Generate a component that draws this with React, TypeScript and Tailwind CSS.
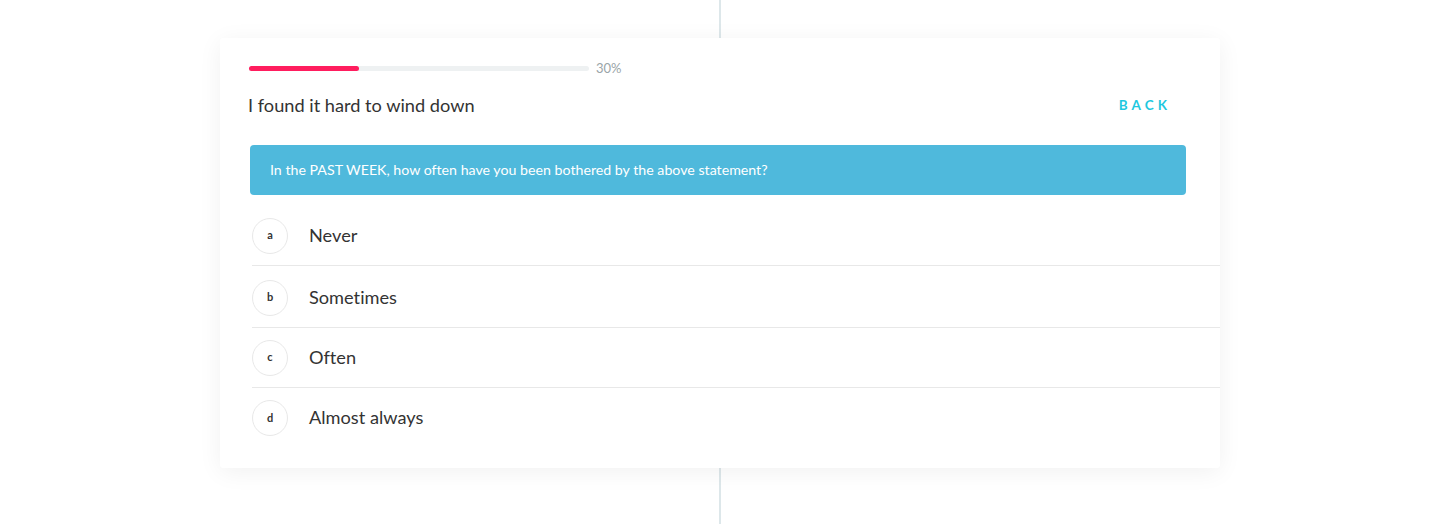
import React from "react";

const options = [
  { key: "a", label: "Never" },
  { key: "b", label: "Sometimes" },
  { key: "c", label: "Often" },
  { key: "d", label: "Almost always" },
];

export default function App() {
  return (
    <div
      className="relative w-[1440px] h-[524px] bg-white overflow-hidden pt-[38px] [font-variant-ligatures:none]"
      style={{ fontFamily: "Lato, 'Open Sans', sans-serif" }}
    >
      <div className="absolute left-[719px] top-0 w-[2px] h-full bg-[#dde7ea]" />
      <div className="relative mx-auto w-[1000px] h-[430px] bg-white rounded-[3px] shadow-[0_4px_24px_rgba(0,0,0,0.06)] pl-[29px] pt-[24px]">
        <div className="flex items-center">
          <div className="w-[340px] h-[5px] rounded-full bg-[#eef1f2]">
            <div className="w-[110px] h-[5px] rounded-full bg-[#ff1d5e]" />
          </div>
          <span className="ml-[7px] text-[13px] text-[#9aa5a8] leading-none">30%</span>
        </div>
        <div className="flex items-center justify-between mt-[18px] pr-[53px]">
          <h1 className="-ml-[1px] text-[18.2px] text-[#333] leading-[24px]">I found it hard to wind down</h1>
          <button className="text-[13.5px] font-bold tracking-[0.3em] text-[#1ec8e0] leading-[24px] -mr-[4px]">BACK</button>
        </div>
        <div className="mt-[28px] ml-[1px] mr-[34px] h-[50px] rounded-[4px] bg-[#4fb9dc] flex items-center pl-[20px] text-[14.2px] text-white">
          In the PAST WEEK, how often have you been bothered by the above statement?
        </div>
        <div className="mt-[11px] ml-[3px]">
          {options.map((o, i) => (
            <div
              key={o.key}
              className={`flex items-center ${i === 1 ? "h-[62px] pt-[2px]" : "h-[60px]"} ${i < options.length - 1 ? "border-b border-[#e8e8e8]" : ""}`}
            >
              <div className="w-[36px] h-[36px] rounded-full border border-[#e8e8e8] flex items-center justify-center text-[11px] font-bold text-[#333]">
                {o.key}
              </div>
              <span className="ml-[21px] text-[18.2px] text-[#333]">{o.label}</span>
            </div>
          ))}
        </div>
      </div>
    </div>
  );
}
